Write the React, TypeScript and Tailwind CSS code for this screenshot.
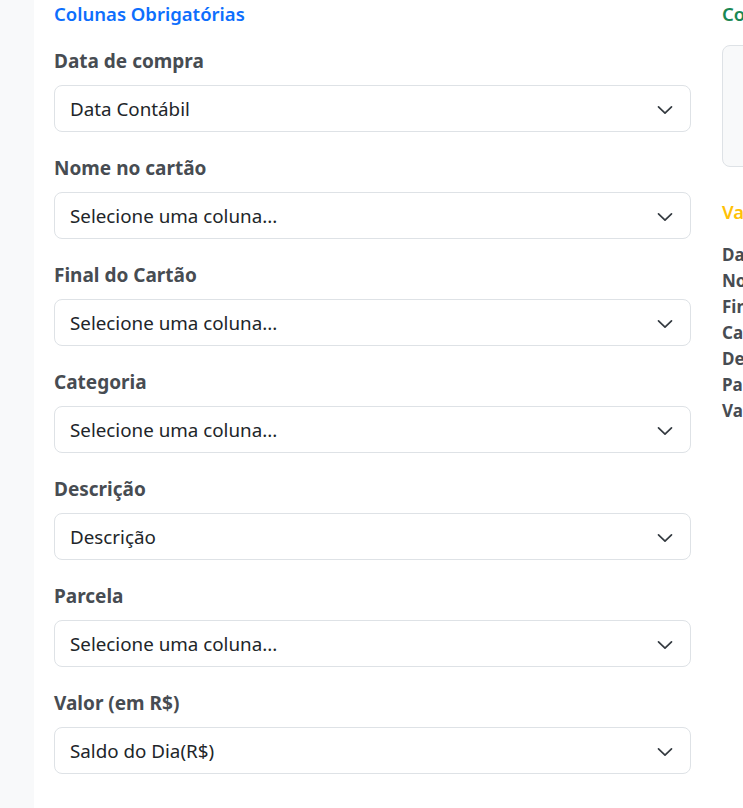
import React from "react";

const fields = [
  { label: "Data de compra", value: "Data Contábil" },
  { label: "Nome no cartão", value: "Selecione uma coluna..." },
  { label: "Final do Cartão", value: "Selecione uma coluna..." },
  { label: "Categoria", value: "Selecione uma coluna..." },
  { label: "Descrição", value: "Descrição" },
  { label: "Parcela", value: "Selecione uma coluna..." },
  { label: "Valor (em R$)", value: "Saldo do Dia(R$)" },
];

function Chevron() {
  return (
    <svg width="16" height="10" viewBox="0 0 16 10" fill="none" className="shrink-0">
      <path d="M1.5 1.8 8 8.2 14.5 1.8" stroke="#343a40" strokeWidth="1.7" strokeLinecap="round" strokeLinejoin="round" />
    </svg>
  );
}

export default function App() {
  return (
    <div
      className="flex h-[808px] w-full overflow-hidden bg-white"
      style={{ fontFamily: '"Noto Sans", "Open Sans", sans-serif' }}
    >
      <div className="w-[34px] shrink-0 bg-[#f8f9fa]" />
      <div className="flex flex-1 gap-[31px] pl-[20px]">
        <div className="flex w-[637px] shrink-0 flex-col">
          <h2 className="h-[28px] text-[18.5px] font-semibold leading-[28px] text-[#0d6efd]">
            Colunas Obrigatórias
          </h2>
          <div className="mt-[19px] flex flex-col gap-[22px]">
            {fields.map((f) => (
              <div key={f.label} className="flex flex-col gap-[10px]">
                <label className="h-[28px] text-[19px] font-bold leading-[28px] text-[#474c52]">
                  {f.label}
                </label>
                <div className="flex h-[47px] items-center justify-between rounded-[8px] border border-[#dee2e6] bg-white pl-[15px] pr-[17px] pt-[2px]">
                  <span className="text-[18.8px] text-[#212529]">{f.value}</span>
                  <Chevron />
                </div>
              </div>
            ))}
          </div>
        </div>
        <div className="flex w-[300px] shrink-0 flex-col">
          <h2 className="h-[28px] text-[18.5px] font-semibold leading-[28px] text-[#198754] whitespace-nowrap">
            Conteúdo do Arquivo
          </h2>
          <div className="mt-[17px] h-[122px] rounded-[8px] border border-[#dee2e6] bg-[#f8f9fa]" />
          <h2 className="mt-[31px] h-[28px] text-[18.5px] font-semibold leading-[28px] text-[#ffc107] whitespace-nowrap">
            Valores Mapeados
          </h2>
          <div className="mt-[16px] flex flex-col text-[17px] font-bold leading-[26px] text-[#474c52] whitespace-nowrap">
            <span>Data de compra: Data Contábil</span>
            <span>Nome no cartão: —</span>
            <span>Final do Cartão: —</span>
            <span>Categoria: —</span>
            <span>Descrição: Descrição</span>
            <span>Parcela: —</span>
            <span>Valor: Saldo do Dia(R$)</span>
          </div>
        </div>
      </div>
    </div>
  );
}
